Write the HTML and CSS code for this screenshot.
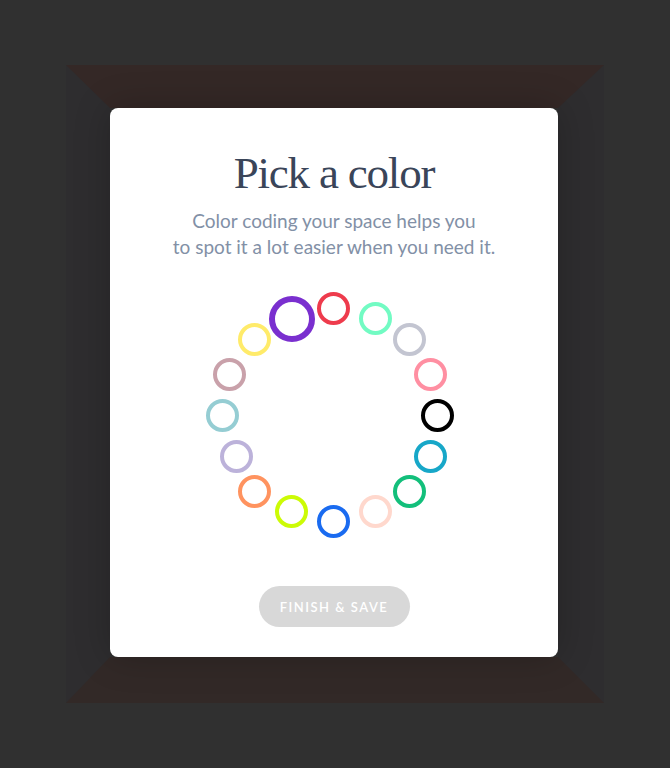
FILE: index.html
```html
<!DOCTYPE html>
<html>
<head>
<meta charset="utf-8">
<link rel="stylesheet" href="styles.css">
</head>
<body>
<div class="stage">
  <div class="frame">
    <div class="card">
      <h1 class="title">Pick a color</h1>
      <p class="subtitle">Color coding your space helps you<br>to spot it a lot easier when you need it.</p>
      <div class="ring">
        <span class="dot red" style="--x:119.3;--y:13.3"></span>
        <span class="dot mint" style="--x:161.3;--y:23.7"></span>
        <span class="dot gray" style="--x:195.7;--y:44.3"></span>
        <span class="dot pink" style="--x:216;--y:79.7"></span>
        <span class="dot black" style="--x:223.3;--y:120.3"></span>
        <span class="dot cyan" style="--x:216;--y:161"></span>
        <span class="dot green" style="--x:195.7;--y:196.7"></span>
        <span class="dot peach" style="--x:161.3;--y:216"></span>
        <span class="dot blue" style="--x:119.3;--y:226.7"></span>
        <span class="dot lime" style="--x:77.7;--y:216"></span>
        <span class="dot orange" style="--x:40;--y:196.7"></span>
        <span class="dot lavender" style="--x:22.7;--y:161"></span>
        <span class="dot teal" style="--x:8.7;--y:120.3"></span>
        <span class="dot mauve" style="--x:15.7;--y:79.3"></span>
        <span class="dot yellow" style="--x:40;--y:44.3"></span>
        <span class="dot purple selected" style="--x:77.7;--y:24.3"></span>
      </div>
      <button class="save">FINISH &amp; SAVE</button>
    </div>
  </div>
</div>
</body>
</html>
```
FILE: styles.css
```css
html, body {
  margin: 0;
  padding: 0;
  height: 100%;
  background: #303030;
}
.stage {
  height: 768px;
  display: flex;
  align-items: center;
  justify-content: center;
}
.frame {
  border-style: solid;
  border-width: 43px 46px 46px 44px;
  border-top-color: #342826;
  border-bottom-color: #322927;
  border-left-color: #2e2d2f;
  border-right-color: #2e2d2f;
}
.card {
  width: 448px;
  height: 549px;
  box-sizing: border-box;
  background: #fff;
  border-radius: 8px;
  box-shadow: 0 0 36px rgba(0, 0, 0, 0.22);
  padding-top: 38px;
  display: flex;
  flex-direction: column;
  align-items: center;
}
.title {
  margin: 0;
  font-family: "Liberation Serif", "DejaVu Serif", serif;
  font-weight: 400;
  font-size: 45px;
  line-height: 54px;
  letter-spacing: -1.2px;
  color: #3a4559;
}
.subtitle {
  margin: 8px 0 0;
  font-family: Lato, "Noto Sans", sans-serif;
  font-size: 19px;
  line-height: 26px;
  color: #8290a6;
  text-align: center;
}
.ring {
  position: relative;
  width: 240px;
  height: 240px;
  margin-top: 35px;
}
.dot {
  position: absolute;
  left: calc(var(--x) * 1px);
  top: calc(var(--y) * 1px);
  width: 33px;
  height: 33px;
  margin: -16.5px 0 0 -16.5px;
  box-sizing: border-box;
  border: 4px solid #000;
  border-radius: 50%;
}
.dot.selected {
  width: 46px;
  height: 46px;
  margin: -23px 0 0 -23px;
  border-width: 6px;
}
.red { border-color: #ee3b4c; }
.mint { border-color: #72fbc3; }
.gray { border-color: #c3c5d1; }
.pink { border-color: #ff8fa2; }
.black { border-color: #000000; }
.cyan { border-color: #17a7c8; }
.green { border-color: #13bf7b; }
.peach { border-color: #ffd8cd; }
.blue { border-color: #1a6bf0; }
.lime { border-color: #ccfb06; }
.orange { border-color: #ff935f; }
.lavender { border-color: #bcb2da; }
.teal { border-color: #95cdd3; }
.mauve { border-color: #c9a1aa; }
.yellow { border-color: #ffeb6a; }
.purple { border-color: #7a2fcf; }
.save {
  margin-top: 51px;
  width: 151px;
  height: 41px;
  border: 0;
  border-radius: 21px;
  background: #d8d8d8;
  color: #fff;
  font-family: Lato, "Noto Sans", sans-serif;
  font-size: 13px;
  font-weight: 600;
  letter-spacing: 1.5px;
  padding: 0;
}
```
